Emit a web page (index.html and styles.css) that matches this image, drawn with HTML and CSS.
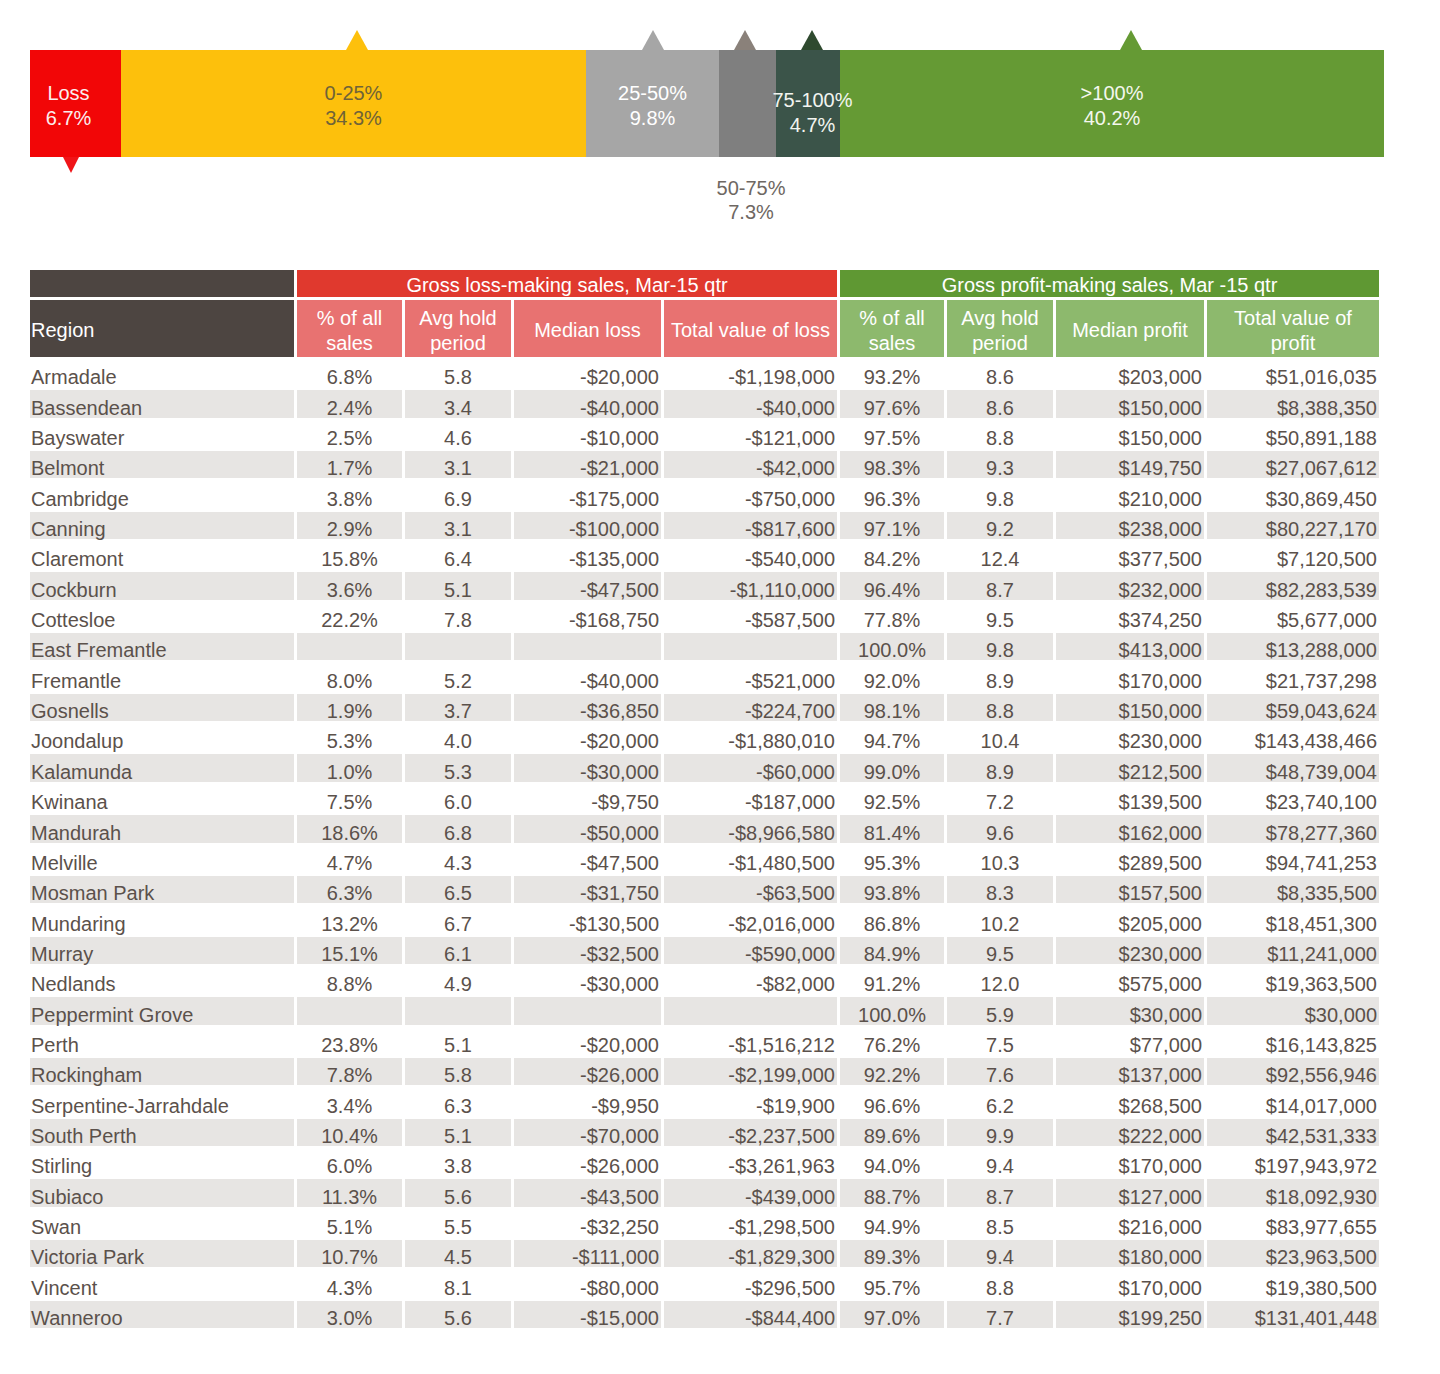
FILE: index.html
```html
<!DOCTYPE html>
<html lang="en">
<head>
<meta charset="utf-8">
<title>Gross loss and profit-making sales</title>
<link rel="stylesheet" href="styles.css">
</head>
<body>
<div class="page">
  <div class="bar">
    <div class="seg seg-loss"><span>Loss<br>6.7%</span></div>
    <div class="seg seg-q1"><span>0-25%<br>34.3%</span></div>
    <div class="seg seg-q2"><span>25-50%<br>9.8%</span></div>
    <div class="seg seg-q3"><span class="below">50-75%<br>7.3%</span></div>
    <div class="seg seg-q4"><span>75-100%<br>4.7%</span></div>
    <div class="seg seg-q5"><span>&gt;100%<br>40.2%</span></div>
  </div>

  <div class="table">
    <div class="grp-row">
      <div class="grp grp-region"></div>
      <div class="grp grp-loss">Gross loss-making sales, Mar-15 qtr</div>
      <div class="grp grp-profit">Gross profit-making sales, Mar -15 qtr</div>
    </div>
    <div class="row head">
      <div class="h h-region">Region</div>
      <div class="h h-loss">% of all<br>sales</div>
      <div class="h h-loss">Avg hold<br>period</div>
      <div class="h h-loss">Median loss</div>
      <div class="h h-loss">Total value of loss</div>
      <div class="h h-profit">% of all<br>sales</div>
      <div class="h h-profit">Avg hold<br>period</div>
      <div class="h h-profit">Median profit</div>
      <div class="h h-profit">Total value of<br>profit</div>
    </div>

    <div class="row"><div>Armadale</div><div>6.8%</div><div>5.8</div><div>-$20,000</div><div>-$1,198,000</div><div>93.2%</div><div>8.6</div><div>$203,000</div><div>$51,016,035</div></div>
    <div class="row alt"><div>Bassendean</div><div>2.4%</div><div>3.4</div><div>-$40,000</div><div>-$40,000</div><div>97.6%</div><div>8.6</div><div>$150,000</div><div>$8,388,350</div></div>
    <div class="row"><div>Bayswater</div><div>2.5%</div><div>4.6</div><div>-$10,000</div><div>-$121,000</div><div>97.5%</div><div>8.8</div><div>$150,000</div><div>$50,891,188</div></div>
    <div class="row alt"><div>Belmont</div><div>1.7%</div><div>3.1</div><div>-$21,000</div><div>-$42,000</div><div>98.3%</div><div>9.3</div><div>$149,750</div><div>$27,067,612</div></div>
    <div class="row"><div>Cambridge</div><div>3.8%</div><div>6.9</div><div>-$175,000</div><div>-$750,000</div><div>96.3%</div><div>9.8</div><div>$210,000</div><div>$30,869,450</div></div>
    <div class="row alt"><div>Canning</div><div>2.9%</div><div>3.1</div><div>-$100,000</div><div>-$817,600</div><div>97.1%</div><div>9.2</div><div>$238,000</div><div>$80,227,170</div></div>
    <div class="row"><div>Claremont</div><div>15.8%</div><div>6.4</div><div>-$135,000</div><div>-$540,000</div><div>84.2%</div><div>12.4</div><div>$377,500</div><div>$7,120,500</div></div>
    <div class="row alt"><div>Cockburn</div><div>3.6%</div><div>5.1</div><div>-$47,500</div><div>-$1,110,000</div><div>96.4%</div><div>8.7</div><div>$232,000</div><div>$82,283,539</div></div>
    <div class="row"><div>Cottesloe</div><div>22.2%</div><div>7.8</div><div>-$168,750</div><div>-$587,500</div><div>77.8%</div><div>9.5</div><div>$374,250</div><div>$5,677,000</div></div>
    <div class="row alt"><div>East Fremantle</div><div></div><div></div><div></div><div></div><div>100.0%</div><div>9.8</div><div>$413,000</div><div>$13,288,000</div></div>
    <div class="row"><div>Fremantle</div><div>8.0%</div><div>5.2</div><div>-$40,000</div><div>-$521,000</div><div>92.0%</div><div>8.9</div><div>$170,000</div><div>$21,737,298</div></div>
    <div class="row alt"><div>Gosnells</div><div>1.9%</div><div>3.7</div><div>-$36,850</div><div>-$224,700</div><div>98.1%</div><div>8.8</div><div>$150,000</div><div>$59,043,624</div></div>
    <div class="row"><div>Joondalup</div><div>5.3%</div><div>4.0</div><div>-$20,000</div><div>-$1,880,010</div><div>94.7%</div><div>10.4</div><div>$230,000</div><div>$143,438,466</div></div>
    <div class="row alt"><div>Kalamunda</div><div>1.0%</div><div>5.3</div><div>-$30,000</div><div>-$60,000</div><div>99.0%</div><div>8.9</div><div>$212,500</div><div>$48,739,004</div></div>
    <div class="row"><div>Kwinana</div><div>7.5%</div><div>6.0</div><div>-$9,750</div><div>-$187,000</div><div>92.5%</div><div>7.2</div><div>$139,500</div><div>$23,740,100</div></div>
    <div class="row alt"><div>Mandurah</div><div>18.6%</div><div>6.8</div><div>-$50,000</div><div>-$8,966,580</div><div>81.4%</div><div>9.6</div><div>$162,000</div><div>$78,277,360</div></div>
    <div class="row"><div>Melville</div><div>4.7%</div><div>4.3</div><div>-$47,500</div><div>-$1,480,500</div><div>95.3%</div><div>10.3</div><div>$289,500</div><div>$94,741,253</div></div>
    <div class="row alt"><div>Mosman Park</div><div>6.3%</div><div>6.5</div><div>-$31,750</div><div>-$63,500</div><div>93.8%</div><div>8.3</div><div>$157,500</div><div>$8,335,500</div></div>
    <div class="row"><div>Mundaring</div><div>13.2%</div><div>6.7</div><div>-$130,500</div><div>-$2,016,000</div><div>86.8%</div><div>10.2</div><div>$205,000</div><div>$18,451,300</div></div>
    <div class="row alt"><div>Murray</div><div>15.1%</div><div>6.1</div><div>-$32,500</div><div>-$590,000</div><div>84.9%</div><div>9.5</div><div>$230,000</div><div>$11,241,000</div></div>
    <div class="row"><div>Nedlands</div><div>8.8%</div><div>4.9</div><div>-$30,000</div><div>-$82,000</div><div>91.2%</div><div>12.0</div><div>$575,000</div><div>$19,363,500</div></div>
    <div class="row alt"><div>Peppermint Grove</div><div></div><div></div><div></div><div></div><div>100.0%</div><div>5.9</div><div>$30,000</div><div>$30,000</div></div>
    <div class="row"><div>Perth</div><div>23.8%</div><div>5.1</div><div>-$20,000</div><div>-$1,516,212</div><div>76.2%</div><div>7.5</div><div>$77,000</div><div>$16,143,825</div></div>
    <div class="row alt"><div>Rockingham</div><div>7.8%</div><div>5.8</div><div>-$26,000</div><div>-$2,199,000</div><div>92.2%</div><div>7.6</div><div>$137,000</div><div>$92,556,946</div></div>
    <div class="row"><div>Serpentine-Jarrahdale</div><div>3.4%</div><div>6.3</div><div>-$9,950</div><div>-$19,900</div><div>96.6%</div><div>6.2</div><div>$268,500</div><div>$14,017,000</div></div>
    <div class="row alt"><div>South Perth</div><div>10.4%</div><div>5.1</div><div>-$70,000</div><div>-$2,237,500</div><div>89.6%</div><div>9.9</div><div>$222,000</div><div>$42,531,333</div></div>
    <div class="row"><div>Stirling</div><div>6.0%</div><div>3.8</div><div>-$26,000</div><div>-$3,261,963</div><div>94.0%</div><div>9.4</div><div>$170,000</div><div>$197,943,972</div></div>
    <div class="row alt"><div>Subiaco</div><div>11.3%</div><div>5.6</div><div>-$43,500</div><div>-$439,000</div><div>88.7%</div><div>8.7</div><div>$127,000</div><div>$18,092,930</div></div>
    <div class="row"><div>Swan</div><div>5.1%</div><div>5.5</div><div>-$32,250</div><div>-$1,298,500</div><div>94.9%</div><div>8.5</div><div>$216,000</div><div>$83,977,655</div></div>
    <div class="row alt"><div>Victoria Park</div><div>10.7%</div><div>4.5</div><div>-$111,000</div><div>-$1,829,300</div><div>89.3%</div><div>9.4</div><div>$180,000</div><div>$23,963,500</div></div>
    <div class="row"><div>Vincent</div><div>4.3%</div><div>8.1</div><div>-$80,000</div><div>-$296,500</div><div>95.7%</div><div>8.8</div><div>$170,000</div><div>$19,380,500</div></div>
    <div class="row alt"><div>Wanneroo</div><div>3.0%</div><div>5.6</div><div>-$15,000</div><div>-$844,400</div><div>97.0%</div><div>7.7</div><div>$199,250</div><div>$131,401,448</div></div>
  </div>
</div>
</body>
</html>
```
FILE: styles.css
```css
* { box-sizing: border-box; }

html, body {
  margin: 0;
  padding: 0;
  background: #ffffff;
}

body {
  font-family: "Liberation Sans", Arial, Helvetica, sans-serif;
  font-size: 20px;
  color: #5b514b;
}

.page {
  width: 1440px;
  padding: 50px 0 40px 30px;
}

/* ---------- distribution bar ---------- */
.bar {
  display: flex;
  width: 1354px;
  height: 107px;
}

.seg {
  position: relative;
  display: flex;
  align-items: center;
  justify-content: center;
  padding-top: 4px;
  line-height: 25px;
  text-align: center;
  white-space: nowrap;
  color: #ffffff;
}

.seg::before {
  content: "";
  position: absolute;
  width: 0;
  height: 0;
  top: -20px;
  left: calc(var(--tip) - 11px);
  border-left: 11px solid transparent;
  border-right: 11px solid transparent;
  border-bottom: 20px solid var(--tipc);
}

.seg-loss {
  width: 91px;
  background: #f20607;
  padding-right: 14px;
  color: #fbeeee;
}
.seg-loss::before {
  top: 100%;
  left: 33px;
  border-left: 8.5px solid transparent;
  border-right: 8.5px solid transparent;
  border-bottom: 0;
  border-top: 16px solid #f01418;
}

.seg-q1 {
  width: 465px;
  background: #fdc00c;
  color: #6f6338;
  --tip: 236px;
  --tipc: #fdc00c;
}

.seg-q2 {
  width: 133px;
  background: #a6a6a6;
  --tip: 67px;
  --tipc: #a6a6a6;
}

.seg-q3 {
  width: 57px;
  background: #7f7f7f;
  --tip: 26px;
  --tipc: #8a817a;
}

.seg-q4 {
  width: 64px;
  background: #3b5449;
  z-index: 1;
  padding-top: 18px;
  padding-left: 9px;
  color: #f2f5f0;
  --tip: 36px;
  --tipc: #2f4a2f;
}

.seg-q5 {
  width: 544px;
  background: #659a34;
  color: #f4f7ee;
  --tip: 291px;
  --tipc: #659a34;
}

.below {
  position: absolute;
  top: calc(100% + 19px);
  left: 32px;
  transform: translateX(-50%);
  line-height: 24px;
  color: #6e6762;
}

/* ---------- table ---------- */
.table {
  display: flex;
  flex-direction: column;
  gap: 3px;
  width: 1349px;
  margin-top: 113px;
}

.grp-row {
  display: grid;
  grid-template-columns: 264px 540px 539px;
  column-gap: 3px;
  height: 27px;
}

.grp {
  text-align: center;
  color: #ffffff;
  line-height: 27px;
  padding-top: 2px;
  height: 27px;
  white-space: nowrap;
}
.grp-region { background: #4d4541; }
.grp-loss { background: #e0392e; }
.grp-profit { background: #5f9833; }

.row {
  display: grid;
  grid-template-columns: 264px 105px 106px 147px 173px 104px 106px 148px 172px;
  column-gap: 3px;
  height: 27.35px;
}

.row > div {
  display: flex;
  align-items: flex-end;
  line-height: 19px;
  white-space: nowrap;
}

.row > div:nth-child(1) { justify-content: flex-start; padding-left: 1px; }
.row > div:nth-child(2),
.row > div:nth-child(3),
.row > div:nth-child(6),
.row > div:nth-child(7) { justify-content: center; }
.row > div:nth-child(4),
.row > div:nth-child(5),
.row > div:nth-child(8),
.row > div:nth-child(9) { justify-content: flex-end; padding-right: 2px; }

.row.alt > div { background: #e7e5e3; }

.row.head {
  height: 57px;
}

.row.head > .h {
  align-items: center;
  justify-content: center;
  text-align: center;
  line-height: 25px;
  color: #ffffff;
  padding: 4px 0 0 0;
}

.row.head > .h-region {
  justify-content: flex-start;
  padding-left: 1px;
  background: #4d4541;
}
.row.head > .h-loss { background: #e87271; }
.row.head > .h-profit { background: #8db96d; }
```
